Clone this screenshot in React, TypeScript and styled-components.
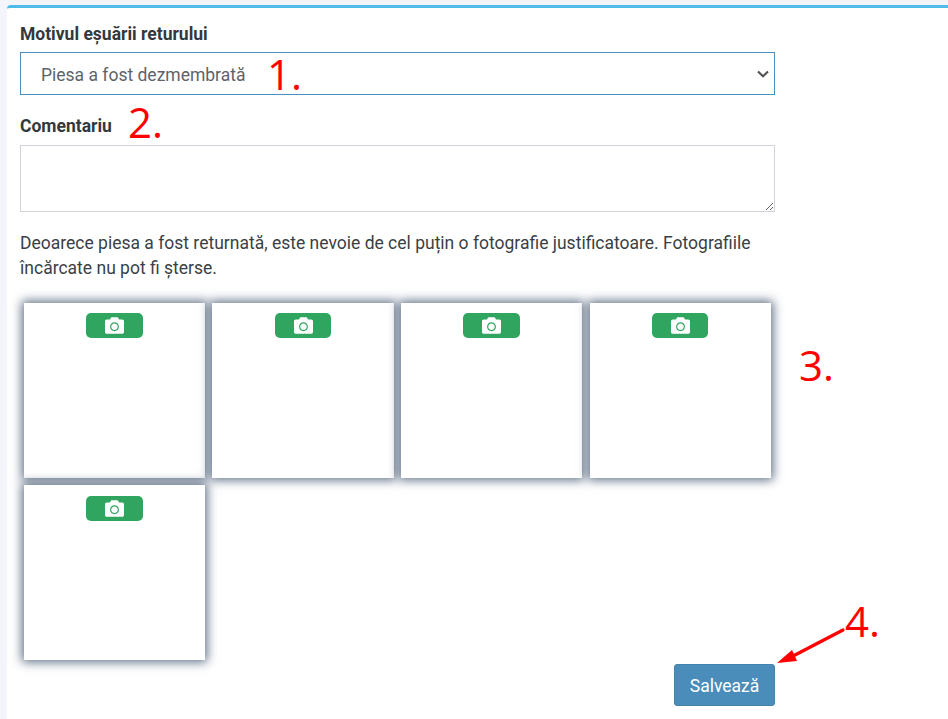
import React from "react";
import styled, { createGlobalStyle } from "styled-components";
import { FaCamera } from "react-icons/fa";

const GlobalStyle = createGlobalStyle`
  html, body {
    margin: 0;
    padding: 0;
    height: 719px;
    overflow: hidden;
    background: #f3f5fa;
    font-family: Roboto, "Liberation Sans", sans-serif;
  }
`;

const Card = styled.main`
  position: relative;
  box-sizing: border-box;
  margin: 5px 0 0 7px;
  height: 714px;
  padding: 16px 173px 0 13px;
  background: #fff;
  border-top: 3px solid #4fbbe8;
  border-top-left-radius: 4px;
  color: #3a3f45;
`;

const Label = styled.label`
  display: block;
  height: 21px;
  margin-bottom: 7px;
  font-size: 17.5px;
  line-height: 21px;
  font-weight: 700;
  color: #33383d;
`;

const chevron =
  "data:image/svg+xml,%3Csvg xmlns='http://www.w3.org/2000/svg' width='12' height='8' viewBox='0 0 12 8'%3E%3Cpath d='M1 1.5 L6 6.2 L11 1.5' fill='none' stroke='%23555' stroke-width='2.2'/%3E%3C/svg%3E";

const Select = styled.select`
  display: block;
  box-sizing: border-box;
  width: 100%;
  height: 43px;
  margin-bottom: 21px;
  padding: 2px 0 0 20px;
  appearance: none;
  background: #fff url("${chevron}") no-repeat right 5px center;
  border: 1px solid #4a90bf;
  border-radius: 0;
  outline: none;
  font-family: Roboto, "Liberation Sans", sans-serif;
  font-size: 17.5px;
  color: #5f6368;
`;

const CommentBox = styled.textarea`
  display: block;
  box-sizing: border-box;
  width: 100%;
  height: 67px;
  margin: 8px 0 19px;
  background: #fff;
  border: 1px solid #d2d2da;
  border-radius: 0;
  outline: none;
`;

const Notice = styled.p`
  margin: 0 0 22px;
  font-size: 17.5px;
  line-height: 25px;
  color: #3a3f45;
`;

const PhotoGrid = styled.div`
  display: grid;
  grid-template-columns: repeat(4, 188.6px);
  grid-auto-rows: 175.2px;
  row-gap: 7px;
`;

const PhotoTile = styled.div`
  display: flex;
  justify-content: center;
  align-items: flex-start;
  box-sizing: border-box;
  width: 181.4px;
  margin-left: 3.8px;
  padding-top: 10.4px;
  background: #fff;
  box-shadow: 0 0 10px 2px #5c6c83;
`;

const CameraButton = styled.button`
  display: flex;
  align-items: center;
  justify-content: center;
  width: 56.4px;
  height: 25px;
  padding: 0;
  background: #2fa55f;
  border: none;
  border-radius: 5px;
  color: #fff;
  font-size: 19px;
`;

const SaveButton = styled.button`
  position: absolute;
  left: 667px;
  top: 656px;
  width: 101px;
  height: 42px;
  padding: 1px 0 0;
  background: #4a8cba;
  border: 1px solid #4583ad;
  border-radius: 3px;
  color: #fff;
  font-family: Roboto, "Liberation Sans", sans-serif;
  font-size: 17.5px;
`;

const Mark = styled.span<{ $left: number; $top: number }>`
  position: absolute;
  left: ${({ $left }) => $left}px;
  top: ${({ $top }) => $top}px;
  font-family: "Open Sans", "Liberation Sans", sans-serif;
  font-size: 42px;
  line-height: 48px;
  color: #ff0000;
`;

const ArrowMark = styled.svg`
  position: absolute;
  left: 760px;
  top: 618px;
`;

const marks = [
  { text: "1.", left: 260, top: 42 },
  { text: "2.", left: 121, top: 90 },
  { text: "3.", left: 792, top: 333 },
  { text: "4.", left: 838, top: 589 },
];

const App = () => {
  return (
    <>
      <GlobalStyle />
      <Card>
        <Label>Motivul eșuării returului</Label>
        <Select defaultValue="dezmembrata">
          <option value="dezmembrata">Piesa a fost dezmembrată</option>
        </Select>
        <Label>Comentariu</Label>
        <CommentBox />
        <Notice>
          Deoarece piesa a fost returnată, este nevoie de cel puțin o fotografie justificatoare. Fotografiile
          <br />
          încărcate nu pot fi șterse.
        </Notice>
        <PhotoGrid>
          {[0, 1, 2, 3, 4].map((i) => (
            <PhotoTile key={i}>
              <CameraButton type="button" aria-label="Fotografie">
                <FaCamera />
              </CameraButton>
            </PhotoTile>
          ))}
        </PhotoGrid>
        <SaveButton type="button">Salvează</SaveButton>
        {marks.map((m) => (
          <Mark key={m.text} $left={m.left} $top={m.top}>
            {m.text}
          </Mark>
        ))}
        <ArrowMark width="90" height="50" viewBox="0 0 90 50">
          <path d="M76 4 L28 29" stroke="#ff0000" strokeWidth="3.2" strokeLinecap="round" fill="none" />
          <path d="M10 37 L25 24 L27 28 L30 35 Z" fill="#ff0000" />
        </ArrowMark>
      </Card>
    </>
  );
};

export default App;
